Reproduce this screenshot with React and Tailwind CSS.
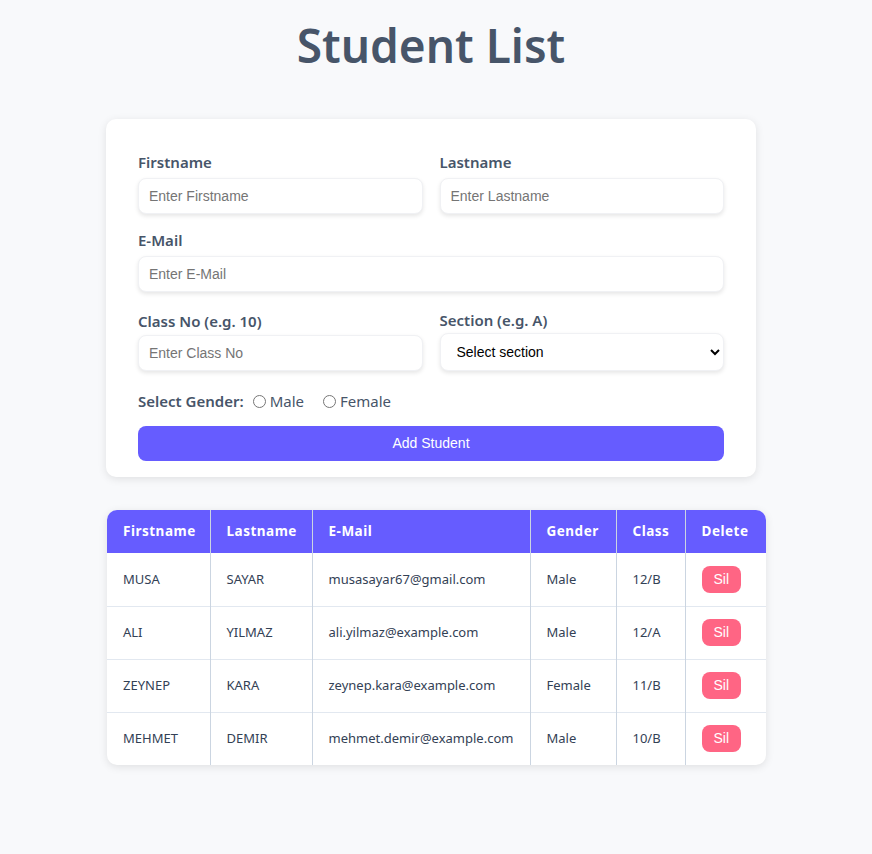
import { useState } from 'react';

const students = [
  { first: 'MUSA', last: 'SAYAR', email: 'musasayar67@gmail.com', gender: 'Male', cls: '12/B' },
  { first: 'ALI', last: 'YILMAZ', email: 'ali.yilmaz@example.com', gender: 'Male', cls: '12/A' },
  { first: 'ZEYNEP', last: 'KARA', email: 'zeynep.kara@example.com', gender: 'Female', cls: '11/B' },
  { first: 'MEHMET', last: 'DEMIR', email: 'mehmet.demir@example.com', gender: 'Male', cls: '10/B' },
];

const inputClass =
  "w-full h-[36px] px-[10px] rounded-lg bg-white border border-[#f0f1f4] shadow-[0_2px_4px_rgba(0,0,0,0.1)] text-[14px] text-black placeholder-[#757575] outline-none font-['Liberation_Sans',Arial,sans-serif]";

function Field({ label, placeholder }) {
  return (
    <div className="flex flex-col gap-[6px]">
      <label className="text-[15px] font-semibold text-[#475569] leading-[20px]">{label}</label>
      <input type="text" placeholder={placeholder} className={inputClass} />
    </div>
  );
}

export default function App() {
  const [gender, setGender] = useState('');

  return (
    <div className="min-h-[854px] bg-[#f8f9fb] font-['Noto_Sans',sans-serif]">
      <div className="w-[862px] pt-[12px] flex flex-col items-center">
        <h1 className="text-[46px] leading-[66px] font-semibold text-[#475569]">Student List</h1>

        <div className="mt-[41px] w-[650px] bg-white rounded-[10px] shadow-[0_2px_8px_rgba(0,0,0,0.1)] px-[32px] pt-[33px] pb-[16px] flex flex-col gap-[16px]">
          <div className="grid grid-cols-2 gap-[17px]">
            <Field label="Firstname" placeholder="Enter Firstname" />
            <Field label="Lastname" placeholder="Enter Lastname" />
          </div>
          <Field label="E-Mail" placeholder="Enter E-Mail" />
          <div className="grid grid-cols-2 gap-[17px] mt-[3px]">
            <div className="flex flex-col gap-[4px]">
              <label className="text-[15px] font-semibold text-[#475569] leading-[20px]">Class No (e.g. 10)</label>
              <input type="text" placeholder="Enter Class No" className={inputClass} />
            </div>
            <div className="flex flex-col gap-[3px] -mt-[1px]">
              <label className="text-[15px] font-semibold text-[#475569] leading-[20px]">Section (e.g. A)</label>
              <select className="w-full h-[38px] pl-[12px] pr-[6px] rounded-lg bg-white border border-[#f0f1f4] shadow-[0_2px_4px_rgba(0,0,0,0.1)] text-[14px] text-black outline-none font-['Liberation_Sans',Arial,sans-serif]">
                <option>Select section</option>
                <option>A</option>
                <option>B</option>
                <option>C</option>
              </select>
            </div>
          </div>
          <div className="flex items-center h-[28px] text-[15px] text-[#475569]">
            <span className="font-semibold mr-[6px]">Select Gender:</span>
            <label className="flex items-center gap-[1px] mr-[16px]">
              <input type="radio" name="gender" checked={gender === 'Male'} onChange={() => setGender('Male')} className="w-[13px] h-[13px] m-[3px]" />
              Male
            </label>
            <label className="flex items-center gap-[1px]">
              <input type="radio" name="gender" checked={gender === 'Female'} onChange={() => setGender('Female')} className="w-[13px] h-[13px] m-[3px]" />
              Female
            </label>
          </div>
          <button className="-mt-[5px] h-[35px] w-full rounded-lg bg-[#665cff] text-white text-[14px] font-['Liberation_Sans',Arial,sans-serif]">
            Add Student
          </button>
        </div>

        <div className="mt-[33px] w-[650px]">
          <div className="ml-[1px] w-[659px] rounded-[10px] overflow-hidden bg-white shadow-[0_2px_8px_rgba(0,0,0,0.1)]">
            <table className="w-full table-fixed border-collapse text-left text-[13px] text-[#334155]">
              <colgroup>
                <col className="w-[103px]" />
                <col className="w-[102px]" />
                <col className="w-[218px]" />
                <col className="w-[86px]" />
                <col className="w-[69px]" />
                <col />
              </colgroup>
              <thead>
                <tr className="bg-[#665cff] text-white h-[43px]">
                  {['Firstname', 'Lastname', 'E-Mail', 'Gender', 'Class', 'Delete'].map((h, i) => (
                    <th key={h} className={`px-[16px] text-[13.5px] font-bold tracking-[0.5px] ${i > 0 ? 'border-l border-[#cbd5e1]' : ''}`}>
                      {h}
                    </th>
                  ))}
                </tr>
              </thead>
              <tbody>
                {students.map((s, r) => (
                  <tr key={s.email} className={`h-[53px] ${r > 0 ? 'border-t border-[#e2e8f0]' : ''}`}>
                    <td className="px-[16px]">{s.first}</td>
                    <td className="px-[16px] border-l border-[#cbd5e1]">{s.last}</td>
                    <td className="px-[16px] border-l border-[#cbd5e1]">{s.email}</td>
                    <td className="px-[16px] border-l border-[#cbd5e1]">{s.gender}</td>
                    <td className="px-[16px] border-l border-[#cbd5e1]">{s.cls}</td>
                    <td className="px-[16px] border-l border-[#cbd5e1]">
                      <button className="h-[27px] px-[12px] rounded-lg bg-[#ff6584] text-white text-[14px] font-['Liberation_Sans',Arial,sans-serif]">
                        Sil
                      </button>
                    </td>
                  </tr>
                ))}
              </tbody>
            </table>
          </div>
        </div>
      </div>
    </div>
  );
}
